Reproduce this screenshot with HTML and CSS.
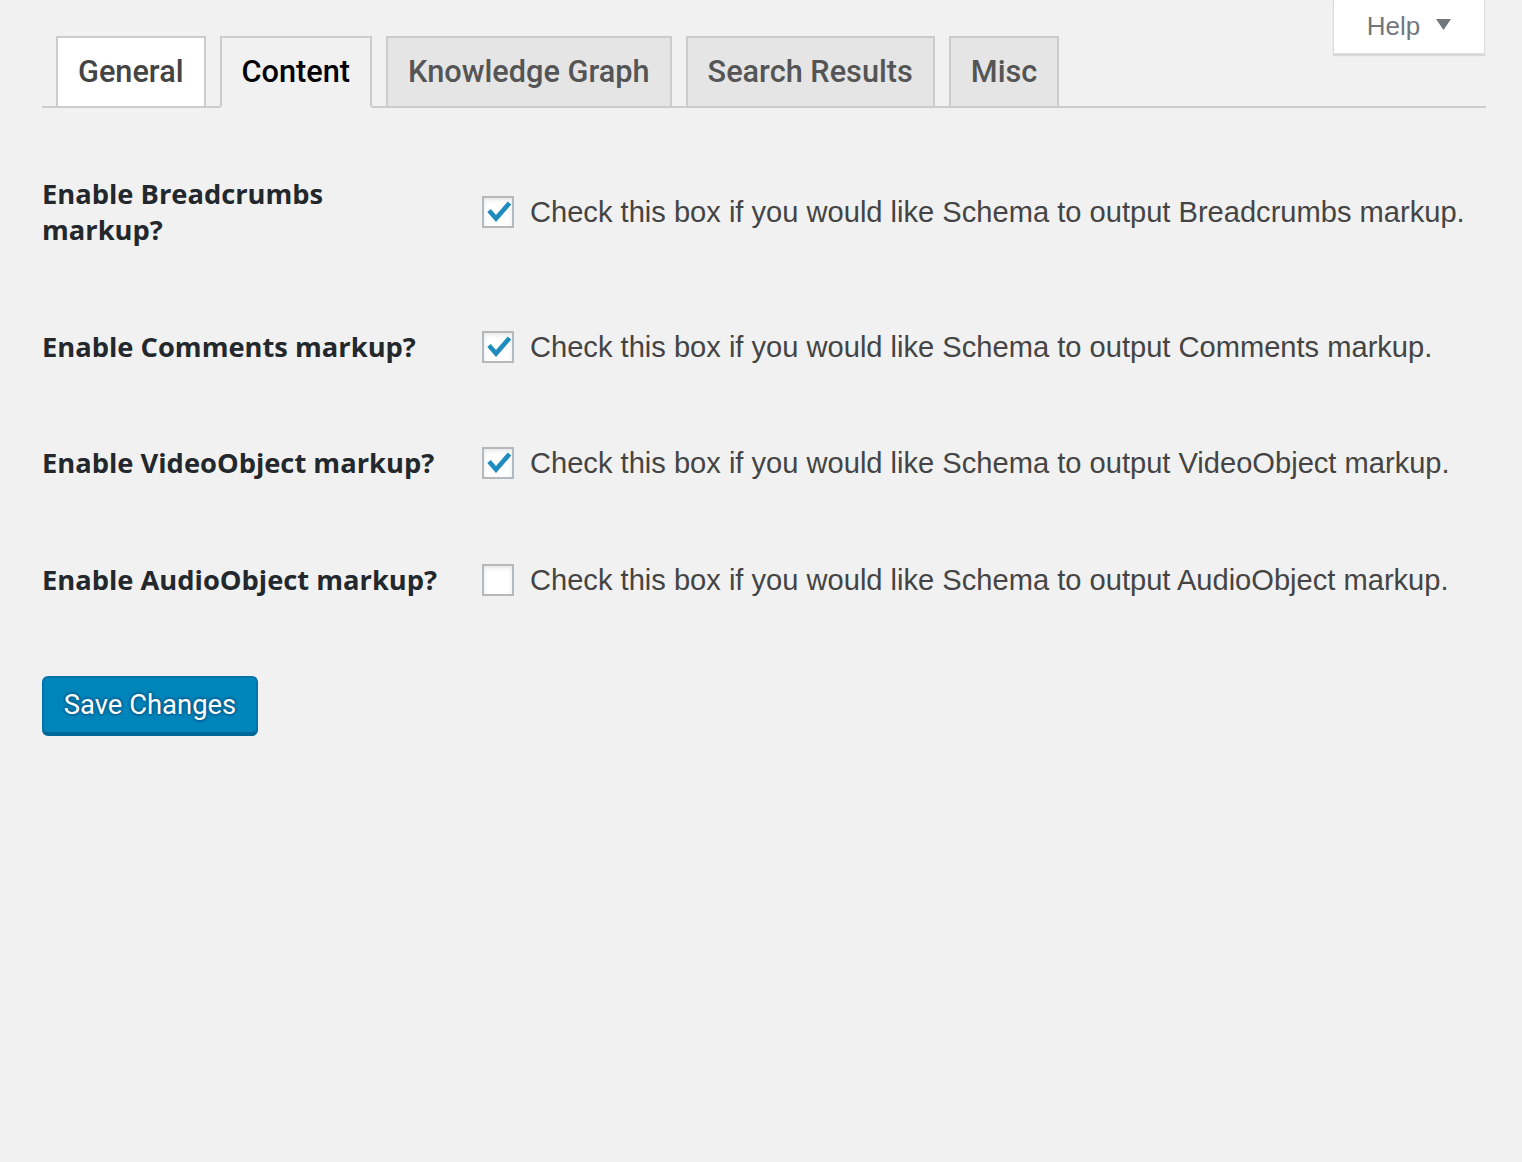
FILE: index.html
```html
<!DOCTYPE html>
<html lang="en">
<head>
<meta charset="utf-8">
<title>Schema Settings</title>
<link rel="stylesheet" href="styles.css">
</head>
<body>
<div class="page">
  <div class="help-tab">
    <span>Help</span>
    <svg class="help-arrow" width="15" height="11" viewBox="0 0 15 11"><polygon points="0,0 15,0 7.5,11" fill="#72777c"/></svg>
  </div>

  <nav class="tabs">
    <a class="tab tab-general">General</a>
    <a class="tab tab-active">Content</a>
    <a class="tab">Knowledge Graph</a>
    <a class="tab">Search Results</a>
    <a class="tab">Misc</a>
  </nav>

  <table class="form-table">
    <tbody>
      <tr>
        <th>Enable Breadcrumbs markup?</th>
        <td>
          <label class="opt">
            <span class="cb checked"><svg viewBox="0 0 32 32" width="32" height="32"><polyline points="7,14.5 14,22.5 27.5,7" fill="none" stroke="#1e8cbe" stroke-width="4.6"/></svg></span>
            <span class="desc">Check this box if you would like Schema to output Breadcrumbs markup.</span>
          </label>
        </td>
      </tr>
      <tr>
        <th>Enable Comments markup?</th>
        <td>
          <label class="opt">
            <span class="cb checked"><svg viewBox="0 0 32 32" width="32" height="32"><polyline points="7,14.5 14,22.5 27.5,7" fill="none" stroke="#1e8cbe" stroke-width="4.6"/></svg></span>
            <span class="desc">Check this box if you would like Schema to output Comments markup.</span>
          </label>
        </td>
      </tr>
      <tr>
        <th>Enable VideoObject markup?</th>
        <td>
          <label class="opt">
            <span class="cb checked"><svg viewBox="0 0 32 32" width="32" height="32"><polyline points="7,14.5 14,22.5 27.5,7" fill="none" stroke="#1e8cbe" stroke-width="4.6"/></svg></span>
            <span class="desc">Check this box if you would like Schema to output VideoObject markup.</span>
          </label>
        </td>
      </tr>
      <tr>
        <th>Enable AudioObject markup?</th>
        <td>
          <label class="opt">
            <span class="cb"></span>
            <span class="desc">Check this box if you would like Schema to output AudioObject markup.</span>
          </label>
        </td>
      </tr>
    </tbody>
  </table>

  <div class="submit">
    <button class="btn-primary" type="button">Save Changes</button>
  </div>
</div>
</body>
</html>
```

FILE: styles.css
```css
html, body {
  margin: 0;
  padding: 0;
  background: #f1f1f1;
}

body {
  font-family: "Liberation Sans", Arial, sans-serif;
  color: #444;
}

.page {
  position: relative;
  padding: 36px 36px 0 42px;
  min-height: 1126px;
}

.help-tab {
  position: absolute;
  top: 0;
  right: 37px;
  width: 152px;
  height: 54px;
  box-sizing: border-box;
  background: #fff;
  border: 1px solid #ddd;
  border-top: 0;
  box-shadow: 0 2px 1px rgba(0, 0, 0, 0.1);
  display: flex;
  align-items: center;
  justify-content: center;
  gap: 16px;
  padding-left: 0;
  font-size: 26px;
  color: #72777c;
}

.help-arrow {
  margin-top: -4px;
}

.tabs {
  display: flex;
  border-bottom: 2px solid #ccc;
  padding-left: 0;
}

.tab {
  margin-left: 14px;
  border: 2px solid #ccc;
  border-bottom: 0;
  padding: 10px 20px;
  font-family: Roboto, "Liberation Sans", sans-serif;
  font-weight: 500;
  font-size: 30.7px;
  line-height: 48px;
  background: #e5e5e5;
  color: #555;
  text-decoration: none;
}

.tab-general {
  background: #fff;
  color: #444;
}

.tab-active {
  background: #f1f1f1;
  color: #000;
  border-bottom: 2px solid #f1f1f1;
  margin-bottom: -2px;
}

.form-table {
  width: 100%;
  table-layout: fixed;
  border-collapse: collapse;
  margin-top: 28px;
}

.form-table th {
  width: 400px;
  padding: 40px 20px 40px 0;
  text-align: left;
  vertical-align: top;
  font-family: "Open Sans", sans-serif;
  font-weight: 700;
  font-size: 27.3px;
  line-height: 36.4px;
  color: #23282d;
}

.form-table td {
  padding: 30px 20px;
  vertical-align: middle;
}

.opt {
  display: flex;
  align-items: center;
  gap: 16px;
}

.cb {
  flex: none;
  width: 32px;
  height: 32px;
  box-sizing: border-box;
  background: #fff;
  border: 2px solid #b4b9be;
  box-shadow: inset 0 2px 4px rgba(0, 0, 0, 0.1);
  position: relative;
}

.cb svg {
  position: absolute;
  left: -2px;
  top: -2px;
}

.desc {
  font-size: 29.1px;
  line-height: 36px;
  color: #444;
  white-space: nowrap;
}

.submit {
  margin-top: 38px;
}

.btn-primary {
  height: 58px;
  width: 216px;
  padding: 0 10px;
  background: #0085ba;
  border: 2px solid #0073aa;
  border-bottom-color: #006799;
  border-radius: 6px;
  box-shadow: 0 2px 0 #006799;
  color: #fff;
  font-family: Roboto, "Liberation Sans", sans-serif;
  font-size: 27.4px;
  text-shadow: 0 -2px 2px #006799, 2px 0 2px #006799, 0 2px 2px #006799, -2px 0 2px #006799;
  cursor: pointer;
}
```
